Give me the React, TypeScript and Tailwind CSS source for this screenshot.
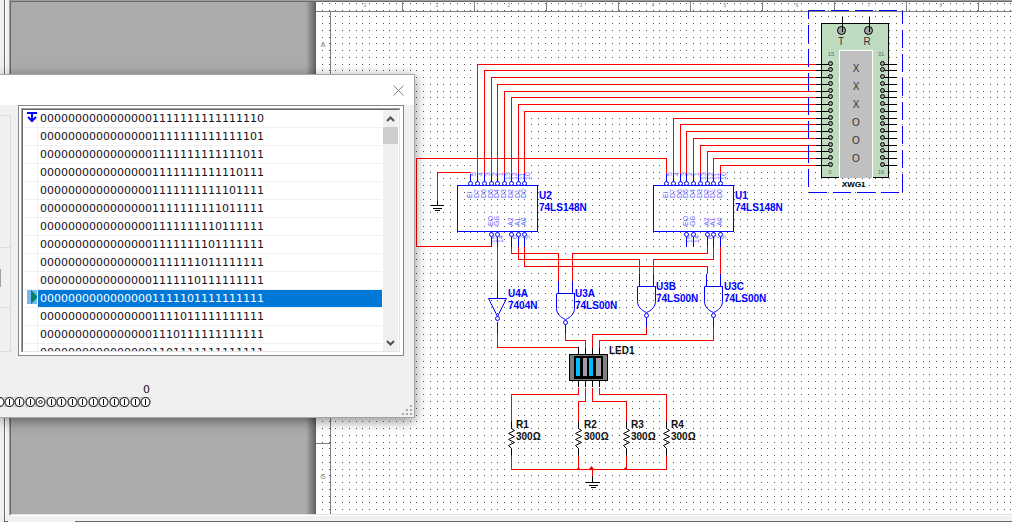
import type { ReactNode } from 'react'
import clsx from 'clsx'

const ROWS = Array.from({ length: 14 }, (_, i) => '0'.repeat(16) + '1'.repeat(15 - i) + '0' + '1'.repeat(i))
const SELECTED_ROW = 10

const DOT_STEPS = [0, 7, 13, 20]
const RULER = [0, 1, 2, 3, 4, 5, 6, 7, 8]
const BUS_Y = [64, 70, 77, 84, 91, 97, 104, 111, 118, 124, 131, 138, 145, 151, 158, 165]
const TOP_PINS = ['EI', 'D7', 'D6', 'D5', 'D4', 'D3', 'D2', 'D1', 'D0']
const TOP_NUMBERS = ['5', '4', '3', '2', '1', '13', '12', '11', '10']
const BOTTOM_PINS = ['EO', 'GS', 'A2', 'A1', 'A0']
const BOTTOM_NUMBERS = ['15', '14', '6', '7', '9']
const U2_TOP = [470, 477, 484, 491, 497, 504, 511, 518, 524]
const U1_TOP = [666, 673, 680, 686, 693, 700, 707, 713, 720]

const WIRES = [
    // encoder inputs
    ...U2_TOP.slice(1).map((x, i) => `M${x} 173V${BUS_Y[i]}H815`),
    ...U1_TOP.slice(1).map((x, i) => `M${x} 173V${BUS_Y[i + 8]}H815`),
    'M470 172H437V200',
    'M666 173V158H416V246H491',
    // encoder outputs
    'M497 246V280',
    'M511 246V253H558V280',
    'M707 246V253H572V280',
    'M518 246V259H639V273',
    'M713 246V259H653V273',
    'M524 246V266H707V273',
    'M720 246V273',
    // gates to display
    'M497 333V347H578',
    'M565 333V340H585V348',
    'M646 326V334H592V348',
    'M713 326V340H599V348',
    // display to resistors
    'M578 387V394H511V421',
    'M585 387V401H578V421',
    'M592 387V401H626V421',
    'M599 387V394H666V421',
    'M511 455V469H666V455',
    'M578 455V469',
    'M626 455V469',
    'M592 469V475',
].join('')

const LABELS = [
    { x: 539, y: 199, name: 'U2', value: '74LS148N', blue: true },
    { x: 735, y: 199, name: 'U1', value: '74LS148N', blue: true },
    { x: 508, y: 297, name: 'U4A', value: '7404N', blue: true },
    { x: 575, y: 297, name: 'U3A', value: '74LS00N', blue: true },
    { x: 656, y: 290, name: 'U3B', value: '74LS00N', blue: true },
    { x: 724, y: 290, name: 'U3C', value: '74LS00N', blue: true },
    { x: 609, y: 354, name: 'LED1', value: '', blue: false },
    { x: 516, y: 428, name: 'R1', value: '300Ω', blue: false },
    { x: 584, y: 428, name: 'R2', value: '300Ω', blue: false },
    { x: 631, y: 428, name: 'R3', value: '300Ω', blue: false },
    { x: 671, y: 428, name: 'R4', value: '300Ω', blue: false },
]

const LED_BARS = [
    { x: 576, width: 4, lit: true },
    { x: 583, width: 4, lit: false },
    { x: 589, width: 4, lit: true },
    { x: 596, width: 5, lit: false },
]

const Vertical = ({ x, y, children }: { x: number; y: number; children: ReactNode }) => (
    <text transform={`translate(${x} ${y}) rotate(-90)`} fontSize="7" fill="#6666ff">
        {children}
    </text>
)

const Encoder = ({ x, top, bottom }: { x: number; top: number[]; bottom: number[] }) => (
    <g>
        <g transform="translate(.5 .5)" fill="none" stroke="#0000ff">
            <rect x={x} y="185" width="80" height="46" shapeRendering="crispEdges" />
            {top.map((px) => (
                <g key={px}>
                    <path d={`M${px} 173V181`} shapeRendering="crispEdges" />
                    <circle cx={px} cy="183" r="2" fill="white" />
                </g>
            ))}
            {bottom.map((px) => (
                <g key={px}>
                    <path d={`M${px} 236V246`} shapeRendering="crispEdges" />
                    <circle cx={px} cy="234" r="2" fill="white" />
                </g>
            ))}
        </g>
        {top.map((px, i) => (
            <g key={px}>
                <Vertical x={px + 2} y={198}>{TOP_PINS[i]}</Vertical>
                <Vertical x={px + 6} y={i > 4 ? 180 : 176}>{TOP_NUMBERS[i]}</Vertical>
            </g>
        ))}
        {bottom.map((px, i) => (
            <g key={px}>
                <Vertical x={px + 2} y={226}>{BOTTOM_PINS[i]}</Vertical>
                <Vertical x={px + 6} y={i < 2 ? 243 : 239}>{BOTTOM_NUMBERS[i]}</Vertical>
            </g>
        ))}
    </g>
)

const Nand = ({ x, y }: { x: number; y: number }) => (
    <g transform={`translate(${x + 0.5} ${y + 0.5})`} fill="none" stroke="#0000ff">
        <path d="M-7 0V-13M7 0V-13M0 31V40M-9 0H9" shapeRendering="crispEdges" />
        <path d="M-9 0V15C-9 20 -5 24 0 26C5 24 9 20 9 15V0" />
        <circle cx="0" cy="29" r="2" fill="white" />
    </g>
)

const Resistor = ({ x }: { x: number }) => (
    <path
        d={`M${x} 421V428L${x + 3} 430L${x - 3} 433L${x + 3} 436L${x - 3} 439L${x + 3} 442L${x - 3} 445L${x} 448V455`}
        fill="none"
        stroke="black"
    />
)

const WordGenerator = () => (
    <g>
        <rect x="821.5" y="23.5" width="67" height="154" fill="#c0dcc0" stroke="black" shapeRendering="crispEdges" />
        <path d="M839.5 178V50.5H872.5V178" fill="#c0c0c0" stroke="white" shapeRendering="crispEdges" />
        <g transform="translate(.5 .5)" stroke="black" fill="#a0a0a4">
            <circle cx="841" cy="30" r="4" />
            <circle cx="868" cy="30" r="4" />
            <path d="M842 16V31M869 16V31" shapeRendering="crispEdges" />
            {BUS_Y.map((y) => (
                <g key={y}>
                    <path d={`M815 ${y}H831M882 ${y}H896`} shapeRendering="crispEdges" />
                    <circle cx="830" cy={y - 1} r="2" />
                    <circle cx="882" cy={y - 1} r="2" />
                </g>
            ))}
        </g>
        <g fill="#303030" fontSize="10" textAnchor="middle">
            <text x="841" y="45">T</text>
            <text x="867" y="45">R</text>
            {['X', 'X', 'X', 'O', 'O', 'O'].map((c, i) => (
                <text key={i} x="856" y={72 + i * 18}>{c}</text>
            ))}
        </g>
        <g fill="#607060" fontSize="6" textAnchor="middle">
            <text x="831" y="56">15</text>
            <text x="881" y="56">31</text>
            <text x="830" y="174">0</text>
            <text x="881" y="174">16</text>
        </g>
        <text x="842" y="187" fontSize="8" fontWeight="bold">XWG1</text>
        <g transform="translate(.5 .5)" stroke="#0000ff" strokeDasharray="18 6" shapeRendering="crispEdges">
            <path d="M808 10V192" strokeDashoffset="10" />
            <path d="M808 10H902" strokeDashoffset="2" />
            <path d="M902 10V192" strokeDashoffset="5" />
            <path d="M808 192H902" />
        </g>
    </g>
)

const LedBar = () => (
    <g shapeRendering="crispEdges">
        <path d="M578.5 347V354M585.5 348V354M592.5 348V354M599.5 348V354M578.5 381V387M585.5 381V387M592.5 381V387M599.5 381V387" stroke="black" />
        <rect x="569.5" y="354.5" width="38" height="26" fill="#808080" stroke="black" />
        <rect x="574" y="356" width="29" height="23" fill="black" />
        <rect x="571" y="356" width="2" height="2" fill="#3090b0" />
        {LED_BARS.map((bar) => (
            <rect key={bar.x} x={bar.x} y="358" width={bar.width} height="18" fill={bar.lit ? '#00bfff' : '#a0a0a4'} />
        ))}
    </g>
)

const Schematic = () => (
    <svg className="block h-full w-full" fontFamily='"Liberation Sans", Arial, sans-serif' aria-label="Circuit schematic">
        <defs>
            <pattern id="grid" x="322" y="3" width="27" height="27" patternUnits="userSpaceOnUse">
                {DOT_STEPS.flatMap((x) =>
                    DOT_STEPS.map((y) => <rect key={`${x}-${y}`} x={x} y={y} width="1" height="1" fill="#555555" />)
                )}
            </pattern>
        </defs>
        <g transform="translate(-316 -2)">
            <rect x="322" y="3" width="4000" height="3000" fill="url(#grid)" shapeRendering="crispEdges" />

            {/* Sheet ruler */}
            <path d="M316 11.5H4000M330.5 11V3000M316 443.5H330" stroke="#808080" shapeRendering="crispEdges" />
            <g fill="#808080" fontSize="7" textAnchor="middle">
                {RULER.map((n) => (
                    <g key={n}>
                        <text x={365 + n * 72} y="7" fontSize="5">{n}</text>
                        <path d={`M${402.5 + n * 72} 2V11`} stroke="#808080" shapeRendering="crispEdges" />
                    </g>
                ))}
                <text x="323" y="47">A</text>
                <text x="323" y="479">G</text>
            </g>

            <path d={WIRES} transform="translate(.5 .5)" fill="none" stroke="#ff0000" shapeRendering="crispEdges" />
            <path d="M576 470L578.500 467L581 470ZM589 469L591.500 466L594 469ZM623 470L626.500 466V470Z" fill="#ff0000" />

            <Encoder x={457} top={U2_TOP} bottom={[491, 497, 511, 518, 524]} />
            <Encoder x={653} top={U1_TOP} bottom={[686, 693, 707, 713, 720]} />
            <WordGenerator />

            {/* Grounds */}
            <g transform="translate(.5 .5)" stroke="black" shapeRendering="crispEdges">
                <path d="M437 200V205M430 205H443M432 208H441M434 210H439" />
                <path d="M592 475V482M585 482H599M588 485H597M590 487H595" />
            </g>

            {/* Inverter */}
            <g transform="translate(.5 .5)" fill="none" stroke="#0000ff">
                <path d="M497 280V298M497 321V333" shapeRendering="crispEdges" />
                <path d="M488 298H506L497 316Z" />
                <circle cx="497" cy="318" r="2" fill="white" />
            </g>
            <Nand x={565} y={293} />
            <Nand x={646} y={286} />
            <Nand x={713} y={286} />
            <LedBar />
            <g transform="translate(.5 .5)">
                {[511, 578, 626, 666].map((x) => <Resistor key={x} x={x} />)}
            </g>

            {LABELS.map((l) => (
                <g key={l.name} fontSize="10" fontWeight="bold" fill={l.blue ? '#0000ff' : '#101010'}>
                    <text x={l.x} y={l.y}>{l.name}</text>
                    {l.value && <text x={l.x} y={l.y + 12}>{l.value}</text>}
                </g>
            ))}
        </g>
    </svg>
)

const PatternList = () => (
    <div className="border border-[#828790] bg-white p-[2px] pr-[3px] pb-[3px]">
        <div className="border-t border-l border-[#a0a0a0]">
            <div className="flex h-[243px] border border-t-[#696969] border-r-[#e3e3e3] border-b-[#e3e3e3] border-l-[#696969]">
                <ul className="flex-1 overflow-hidden" role="listbox" aria-label="Patterns">
                    {ROWS.map((row, i) => (
                        <li key={row} role="option" aria-selected={i === SELECTED_ROW} className="flex h-[18px] border-b border-[#f0f0f0]">
                            <div className="flex w-[15px] justify-end border-r border-[#f0f0f0]">
                                {i === 0 && (
                                    <svg width="10" height="14" viewBox="0 0 10 14">
                                        <path d="M0 3H10M5 3V11M1 7L5 11L9 7" fill="none" stroke="#0000ff" strokeWidth="2" />
                                    </svg>
                                )}
                                {i === SELECTED_ROW && (
                                    <svg width="10" height="14" viewBox="0 0 10 14" className="bg-[#76b9ed]">
                                        <path d="M4 0L10 6V8L4 14Z" fill="#008066" />
                                    </svg>
                                )}
                            </div>
                            <span className={clsx('flex-1 pl-[2px] leading-[17px]', i === SELECTED_ROW ? 'bg-[#0078d7] text-white' : 'text-[#201020]')}>
                                {row}
                            </span>
                        </li>
                    ))}
                </ul>
                <div className="mr-px ml-px flex w-[15px] flex-col bg-[#f0f0f0]">
                    <button aria-label="Scroll up" className="flex h-[17px] items-center justify-center">
                        <svg width="9" height="6" viewBox="0 0 9 6"><path d="M1 5L4.500 1.500L8 5" fill="none" stroke="#505050" strokeWidth="2" /></svg>
                    </button>
                    <div className="h-[17px] bg-[#cdcdcd]" />
                    <button aria-label="Scroll down" className="mt-auto flex h-[17px] items-center justify-center">
                        <svg width="9" height="6" viewBox="0 0 9 6"><path d="M1 1L4.500 4.500L8 1" fill="none" stroke="#505050" strokeWidth="2" /></svg>
                    </button>
                </div>
            </div>
        </div>
    </div>
)

const TERMINALS = [-1, 9, 19, 30, 40, 51, 61, 72, 82, 93, 103, 114, 124, 135, 145]

const Terminals = () => (
    <svg width="151" height="10" viewBox="0 0 151 10" className="block" aria-label="Output terminals">
        {TERMINALS.map((x, i) => (
            <g key={x} transform={`translate(${x + 0.5} 5)`}>
                <rect x="-5" y="-5" width="9" height="10" fill="#c0c0c0" />
                <circle r="4.500" fill="white" stroke="black" />
                {i === 4
                    ? <path d="M0 -2L2 0L0 2L-2 0Z" fill="white" stroke="black" />
                    : <path d="M0 -3V3" stroke="black" />}
            </g>
        ))}
    </svg>
)

const PatternDialog = () => (
    <section className="absolute top-[74px] left-0 w-[415px] border border-l-0 border-[#a6a6a6] bg-[#f0f0f0] font-['DejaVu_Sans',sans-serif] text-[11px] text-[#201020] shadow-[0_3px_12px_rgba(0,0,0,0.45)]">
        <header className="flex h-[30px] items-center justify-end bg-white pr-[10px]">
            <button aria-label="Close">
                <svg width="11" height="11" viewBox="0 0 11 11"><path d="M.5 .5L10.500 10.500M10.500 .5L.5 10.500" stroke="#808080" /></svg>
            </button>
        </header>
        <div className="flex">
            <div className="mt-[10px] mr-[7px] flex h-[237px] w-[11px] flex-col border-t border-r border-b border-[#dcdcdc]">
                <div className="h-[132px] border-b border-[#dcdcdc]" />
                <div className="flex h-[60px] items-center border-b border-[#dcdcdc]">
                    <div className="h-[18px] w-px bg-[#a0a0a0]" />
                </div>
            </div>
            <div className="w-[386px]"><PatternList /></div>
        </div>
        <div className="flex h-[61px] items-end justify-between">
            <div className="pb-[10px]">
                <div className="w-[150px] text-right leading-[15px]">0</div>
                <Terminals />
            </div>
            <svg width="12" height="12" viewBox="0 0 12 12" className="mr-px mb-px" fill="#a8a8a8">
                <path d="M9 1h2v2h-2zM9 5h2v2h-2zM5 5h2v2h-2zM9 9h2v2h-2zM5 9h2v2h-2zM1 9h2v2h-2z" />
            </svg>
        </div>
    </section>
)

const App = () => {
    return (
        <div className="relative flex h-screen overflow-hidden bg-[#f0f0f0]">
            <div className="w-1" />
            <div className="flex min-w-0 flex-1 flex-col border-l border-[#696969]">
                <main className="flex min-h-0 flex-1 border-l border-white pl-[3px]">
                    <div className="flex min-w-0 flex-1 border-t border-b border-l border-t-[#a0a0a0] border-b-white border-l-[#a0a0a0]">
                        <div className="flex min-w-0 flex-1 border-t border-b border-l border-t-[#696969] border-b-[#e3e3e3] border-l-[#696969]">
                            {/* Area beside the sheet, with the sheet's shadow on its edge */}
                            <div className="flex w-[305px] justify-end bg-[#ababab]">
                                <div className="w-[10px] border-r border-[#606060] bg-linear-to-r from-[#ababab] to-[#686868]" />
                            </div>
                            <div className="min-w-0 flex-1 bg-white">
                                <Schematic />
                            </div>
                        </div>
                    </div>
                </main>
                <footer className="flex h-[6px] items-end">
                    <div className="h-px w-[3px] bg-[#696969]" />
                    <div className="w-[67px]" />
                    <div className="h-px flex-1 bg-[#696969]" />
                </footer>
            </div>
            <PatternDialog />
        </div>
    )
}

export default App
